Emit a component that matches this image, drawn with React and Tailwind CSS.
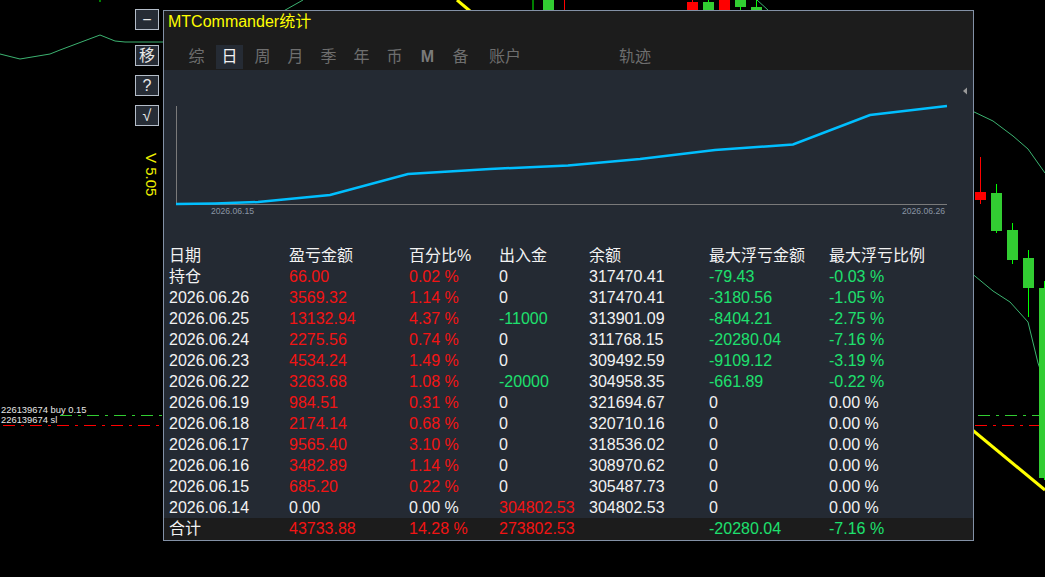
import React from 'react'

const R = 'text-[#f21414]'
const G = 'text-[#1ee06e]'
const W = 'text-[#f2f2f2]'

const HEAD = ['日期', '盈亏金额', '百分比%', '出入金', '余额', '最大浮亏金额', '最大浮亏比例']

const ROWS = [
  [['持仓', W], ['66.00', R], ['0.02 %', R], ['0', W], ['317470.41', W], ['-79.43', G], ['-0.03 %', G]],
  [['2026.06.26', W], ['3569.32', R], ['1.14 %', R], ['0', W], ['317470.41', W], ['-3180.56', G], ['-1.05 %', G]],
  [['2026.06.25', W], ['13132.94', R], ['4.37 %', R], ['-11000', G], ['313901.09', W], ['-8404.21', G], ['-2.75 %', G]],
  [['2026.06.24', W], ['2275.56', R], ['0.74 %', R], ['0', W], ['311768.15', W], ['-20280.04', G], ['-7.16 %', G]],
  [['2026.06.23', W], ['4534.24', R], ['1.49 %', R], ['0', W], ['309492.59', W], ['-9109.12', G], ['-3.19 %', G]],
  [['2026.06.22', W], ['3263.68', R], ['1.08 %', R], ['-20000', G], ['304958.35', W], ['-661.89', G], ['-0.22 %', G]],
  [['2026.06.19', W], ['984.51', R], ['0.31 %', R], ['0', W], ['321694.67', W], ['0', W], ['0.00 %', W]],
  [['2026.06.18', W], ['2174.14', R], ['0.68 %', R], ['0', W], ['320710.16', W], ['0', W], ['0.00 %', W]],
  [['2026.06.17', W], ['9565.40', R], ['3.10 %', R], ['0', W], ['318536.02', W], ['0', W], ['0.00 %', W]],
  [['2026.06.16', W], ['3482.89', R], ['1.14 %', R], ['0', W], ['308970.62', W], ['0', W], ['0.00 %', W]],
  [['2026.06.15', W], ['685.20', R], ['0.22 %', R], ['0', W], ['305487.73', W], ['0', W], ['0.00 %', W]],
  [['2026.06.14', W], ['0.00', W], ['0.00 %', W], ['304802.53', R], ['304802.53', W], ['0', W], ['0.00 %', W]],
]

const TOTAL = [['合计', W], ['43733.88', R], ['14.28 %', R], ['273802.53', R], ['', W], ['-20280.04', G], ['-7.16 %', G]]

const TABS = ['综', '日', '周', '月', '季', '年', '币', 'M', '备']

const COLS = 'grid grid-cols-[120px_120px_90px_90px_120px_120px_1fr] pl-[5px]'

// equity curve, coords relative to the chart box
const CURVE = '12,134 51,133.5 94,132 166,125 244,104 326,99 404,95.5 476,89 551,80 629,74.5 706,45 783,36'

function Candle({ x, top, bottom, wickTop, wickBottom, color }) {
  return (
    <g>
      <line x1={x + 5.5} x2={x + 5.5} y1={wickTop} y2={wickBottom} stroke={color === 'red' ? '#ff0000' : '#00ff00'} strokeWidth="1" />
      <rect x={x} y={top} width="11" height={bottom - top} fill={color === 'red' ? '#ff0000' : '#32cd32'} />
    </g>
  )
}

function Backdrop() {
  return (
    <svg className="absolute inset-0" width="1045" height="577">
      {/* moving averages */}
      <polyline points="0,54 20,59 50,54 60,50 100,35 115,41 125,42 170,42" fill="none" stroke="#3cb371" strokeWidth="1" />
      <polyline points="280,13 303,0" fill="none" stroke="#3cb371" strokeWidth="1" />
      <polyline points="757,0 768,10" fill="none" stroke="#3cb371" strokeWidth="1" />
      <polyline points="970,110 993,121 1013,136 1028,149 1045,173" fill="none" stroke="#3cb371" strokeWidth="1" />
      <polyline points="970,272 993,291 1010,302 1028,322 1038,363 1045,383" fill="none" stroke="#3cb371" strokeWidth="1" />
      <line x1="100" y1="0" x2="100" y2="2" stroke="#00ff00" />

      {/* trend line */}
      <line x1="457" y1="0" x2="470" y2="11" stroke="#ffff00" strokeWidth="3" />
      <line x1="970" y1="428" x2="1045" y2="490" stroke="#ffff00" strokeWidth="3" />

      {/* candles above the panel */}
      <line x1="533" x2="533" y1="0" y2="12" stroke="#00ff00" />
      <rect x="543" y="0" width="11" height="12" fill="#32cd32" />
      <line x1="564.5" x2="564.5" y1="0" y2="12" stroke="#ff0000" />
      <Candle x={687} top={2} bottom={12} wickTop={0} wickBottom={2} color="red" />
      <Candle x={703} top={2} bottom={12} wickTop={0} wickBottom={2} color="green" />
      <Candle x={719} top={0} bottom={12} wickTop={0} wickBottom={0} color="red" />
      <Candle x={735} top={0} bottom={7} wickTop={7} wickBottom={12} color="green" />
      <Candle x={751} top={7} bottom={12} wickTop={0} wickBottom={7} color="green" />

      {/* candles right of the panel */}
      <Candle x={975} top={192} bottom={200} wickTop={157} wickBottom={204} color="red" />
      <Candle x={991} top={193} bottom={231} wickTop={184} wickBottom={233} color="green" />
      <Candle x={1007} top={230} bottom={260} wickTop={223} wickBottom={264} color="green" />
      <Candle x={1023} top={258} bottom={288} wickTop={250} wickBottom={317} color="green" />
      <Candle x={1039} top={288} bottom={478} wickTop={281} wickBottom={480} color="green" />

      {/* order lines */}
      <line x1="60" y1="415.5" x2="1039" y2="415.5" stroke="#32cd32" strokeDasharray="12 6 3 6" />
      <line x1="3" y1="425.5" x2="1039" y2="425.5" stroke="#ff0000" strokeDasharray="12 6 3 6" />
      <text x="1" y="413" fontSize="9.4" fill="#e6e6e6" fontFamily="Liberation Sans, sans-serif">226139674 buy 0.15</text>
      <text x="1" y="423" fontSize="9.4" fill="#e6e6e6" fontFamily="Liberation Sans, sans-serif">226139674 sl</text>
    </svg>
  )
}

function SideButton({ label, className }) {
  return (
    <div className={`w-[24px] h-[21px] flex items-center justify-center border border-[#b4bdc9] bg-[#262c35] text-[#e8e8e8] text-[16px] leading-none ${className}`}>
      {label}
    </div>
  )
}

function Row({ cells, className }) {
  return (
    <div className={`${COLS} h-[21px] items-center leading-[21px] text-[16px] whitespace-nowrap ${className || ''}`}>
      {cells.map(([text, color], i) => (
        <span key={i} className={color}>{text}</span>
      ))}
    </div>
  )
}

export default function App() {
  return (
    <div className="relative w-[1045px] h-[577px] bg-black overflow-hidden font-['Liberation_Sans','Noto_Sans_CJK_SC',sans-serif]">
      <Backdrop />

      {/* side buttons */}
      <div className="absolute left-[135px] top-[9px] flex flex-col">
        <SideButton label="−" />
        <SideButton label="移" className="mt-[15px]" />
        <SideButton label="?" className="mt-[9px]" />
        <SideButton label="√" className="mt-[9px]" />
      </div>
      <div className="absolute left-[144px] top-[153px] [writing-mode:vertical-rl] text-[15px] leading-[15px] text-[#f0f000]">
        V 5.05
      </div>

      {/* stats window */}
      <div className="absolute left-[163px] top-[10px] w-[811px] h-[531px] border border-[#8391a6] flex flex-col bg-[#242a33]">
        <div className="bg-[#1c1c1c] pt-[1px] pb-[1px]">
          <div className="h-[20px] leading-[20px] pl-[4px] text-[16px] text-[#ffff00]">MTCommander统计</div>
          <div className="mt-[13px] h-[24px] flex pl-[19px] gap-[6px] text-[16px] text-[#6e6e6e]">
            {TABS.map((t) => (
              <div
                key={t}
                className={`w-[27px] flex items-center justify-center ${t === '日' ? 'bg-[#252b34] text-[#f2f2f2]' : ''} ${t === 'M' ? 'font-bold text-[#7a7a7a]' : ''}`}
              >
                {t}
              </div>
            ))}
            <div className="w-[50px] flex items-center justify-center">账户</div>
            <div className="ml-[79px] w-[40px] flex items-center justify-center">轨迹</div>
          </div>
        </div>

        {/* equity chart */}
        <svg width="809" height="175" className="block shrink-0">
          <line x1="12.5" y1="36" x2="12.5" y2="134" stroke="#7a7a7a" />
          <line x1="12" y1="134.5" x2="783" y2="134.5" stroke="#7a7a7a" />
          <polyline points={CURVE} fill="none" stroke="#00bfff" strokeWidth="2.5" />
          <text x="47" y="143.5" fontSize="8.6" fill="#8a95a3" fontFamily="Liberation Sans, sans-serif">2026.06.15</text>
          <text x="781" y="143.5" fontSize="8.6" fill="#8a95a3" textAnchor="end" fontFamily="Liberation Sans, sans-serif">2026.06.26</text>
          <polygon points="799,21 803,17.5 803,24.5" fill="#9a9a9a" />
        </svg>

        {/* table */}
        <div className="flex flex-col">
          <Row cells={HEAD.map((h) => [h, W])} />
          {ROWS.map((r, i) => (
            <Row key={i} cells={r} />
          ))}
        </div>
        <div className="flex-1 bg-[#1c1c1c]">
          <Row cells={TOTAL} />
        </div>
      </div>
    </div>
  )
}
